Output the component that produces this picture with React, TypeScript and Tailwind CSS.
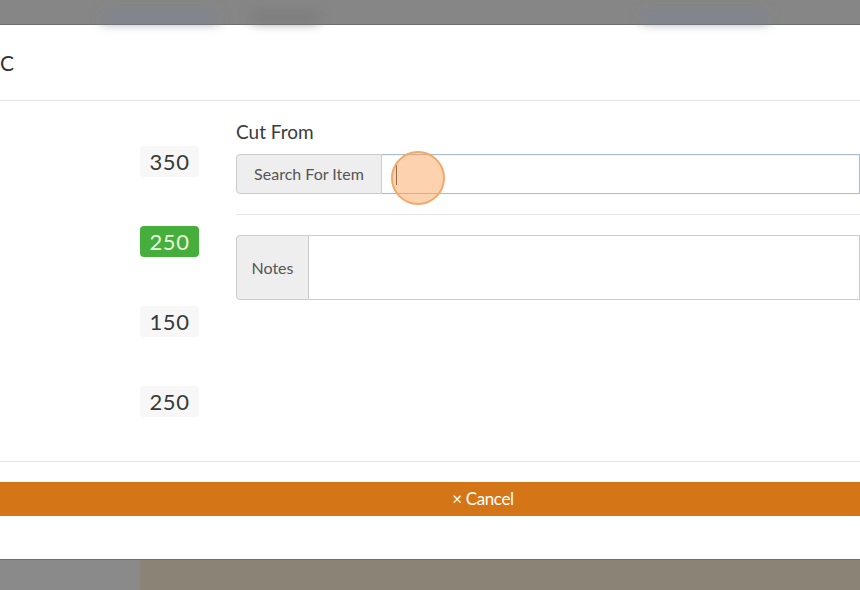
const badges = [
  { value: '350', active: false },
  { value: '250', active: true },
  { value: '150', active: false },
  { value: '250', active: false },
];

function Badge({ value, active }: { value: string; active: boolean }) {
  return (
    <span
      className={
        'flex h-[31px] w-[59px] items-center justify-center rounded-[4px] text-[22px] leading-none tracking-[0.5px] ' +
        (active ? 'bg-[#46ae3c] text-[#e9f8dc]' : 'bg-[#f7f7f7] text-[#3a3a3a]')
      }
    >
      {value}
    </span>
  );
}

export default function App() {
  return (
    <div className="relative flex h-[590px] w-[860px] flex-col overflow-hidden bg-[#888] font-['Lato','Liberation_Sans',sans-serif]">
      {/* blurred page behind the modal */}
      <div className="relative h-[24px] shrink-0 bg-[#868686]">
        <div className="absolute left-[100px] top-[12px] h-[10px] w-[120px] rounded-full bg-[#7f8590] blur-[6px]" />
        <div className="absolute left-[250px] top-[12px] h-[10px] w-[70px] rounded-full bg-[#7b7b7b] blur-[6px]" />
        <div className="absolute left-[640px] top-[12px] h-[10px] w-[130px] rounded-full bg-[#7f8590] blur-[6px]" />
      </div>

      <div className="flex flex-1 flex-col border-t border-[#6e6e6e] bg-white shadow-[0_1px_2px_rgba(0,0,0,0.35)]">
        <div className="flex h-[76px] items-center border-b border-[#e5e5e5]">
          <span className="ml-0 text-[21px] text-[#333]">C</span>
        </div>

        <div className="flex h-[361px] border-b border-[#e5e5e5]">
          <div className="flex w-[199px] shrink-0 flex-col items-end gap-[49px] pt-[45px]">
            {badges.map((b, i) => (
              <Badge key={i} value={b.value} active={b.active} />
            ))}
          </div>

          <div className="ml-[37px] flex flex-1 flex-col pt-[19px]">
            <div className="text-[19px] leading-[24px] text-[#3a3a3a]">Cut From</div>
            <div className="mt-[10px] flex h-[40px]">
              <div className="flex w-[146px] items-center justify-center rounded-l-[4px] border border-[#ccc] bg-[#eee] text-[16px] text-[#555]">
                Search For Item
              </div>
              <div className="relative flex-1 border border-l-0 border-[#a9bccb] bg-white shadow-[inset_0_1px_1px_rgba(0,0,0,0.06)]">
                <span className="absolute left-[14px] top-[10px] h-[20px] w-px bg-[#333]" />
              </div>
            </div>
            <div className="mt-[20px] h-px bg-[#e5e5e5]" />
            <div className="mt-[20px] flex h-[65px]">
              <div className="flex w-[73px] items-center justify-center rounded-l-[4px] border border-[#ccc] bg-[#eee] text-[16px] text-[#555]">
                Notes
              </div>
              <div className="flex-1 border border-l-0 border-[#ccc] bg-white" />
            </div>
          </div>
        </div>

        <div className="pt-[20px]">
          <div className="flex h-[34px] items-center justify-center bg-[#d47617] pl-[106px] text-[17px] tracking-[-0.4px] text-white">
            × Cancel
          </div>
        </div>
      </div>

      <div className="flex h-[31px] shrink-0 border-t border-[#6f6f6f]">
        <div className="w-[140px] bg-[#8a8a8a]" />
        <div className="flex-1 bg-[#8a8376]" />
      </div>

      {/* click highlight */}
      <div className="absolute left-[391px] top-[151px] h-[54px] w-[54px] rounded-full border-2 border-[#f2a868] bg-[#f9a65f]/50" />
    </div>
  );
}
